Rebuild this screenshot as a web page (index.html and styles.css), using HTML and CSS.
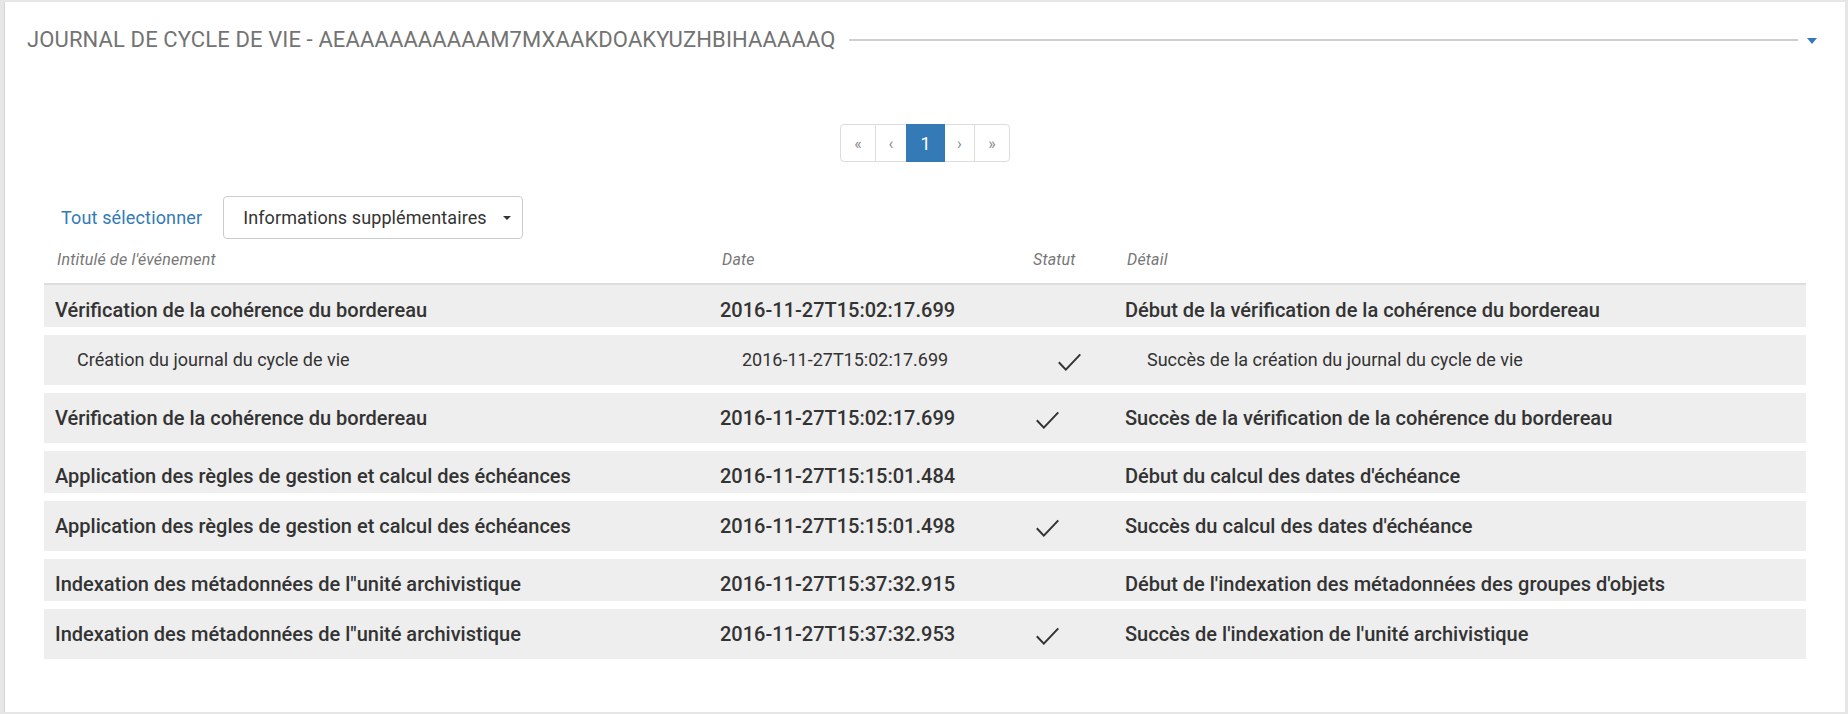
FILE: index.html
```html
<!DOCTYPE html>
<html lang="fr">
<head>
<meta charset="utf-8">
<title>Journal de cycle de vie</title>
<link rel="stylesheet" href="styles.css">
</head>
<body>
<div class="panel">
  <div class="panel-head">
    <span class="title">JOURNAL DE CYCLE DE VIE - AEAAAAAAAAAAM7MXAAKDOAKYUZHBIHAAAAAQ</span>
    <span class="rule"></span>
    <span class="toggle"></span>
  </div>

  <div class="pager-wrap">
    <ul class="pager">
      <li class="pg pg-first">&laquo;</li>
      <li class="pg pg-prev">&lsaquo;</li>
      <li class="pg pg-cur">1</li>
      <li class="pg pg-next">&rsaquo;</li>
      <li class="pg pg-last">&raquo;</li>
    </ul>
  </div>

  <div class="toolbar">
    <a class="select-all">Tout sélectionner</a>
    <div class="dropdown">
      <span>Informations supplémentaires</span>
      <span class="caret"></span>
    </div>
  </div>

  <div class="grid-head">
    <div class="cell">Intitulé de l'événement</div>
    <div class="cell">Date</div>
    <div class="cell">Statut</div>
    <div class="cell">Détail</div>
  </div>

  <div class="rows">
    <div class="row parent">
      <div class="cell">Vérification de la cohérence du bordereau</div>
      <div class="cell">2016-11-27T15:02:17.699</div>
      <div class="cell"></div>
      <div class="cell">Début de la vérification de la cohérence du bordereau</div>
    </div>
    <div class="row child">
      <div class="cell">Création du journal du cycle de vie</div>
      <div class="cell">2016-11-27T15:02:17.699</div>
      <div class="cell"><svg class="ok" viewBox="0 0 23 18" width="23" height="18"><polyline points="0.8,9.3 7.8,16.6 22.3,1.4"/></svg></div>
      <div class="cell">Succès de la création du journal du cycle de vie</div>
    </div>
    <div class="row parent">
      <div class="cell">Vérification de la cohérence du bordereau</div>
      <div class="cell">2016-11-27T15:02:17.699</div>
      <div class="cell"><svg class="ok" viewBox="0 0 23 18" width="23" height="18"><polyline points="0.8,9.3 7.8,16.6 22.3,1.4"/></svg></div>
      <div class="cell">Succès de la vérification de la cohérence du bordereau</div>
    </div>
    <div class="row parent">
      <div class="cell">Application des règles de gestion et calcul des échéances</div>
      <div class="cell">2016-11-27T15:15:01.484</div>
      <div class="cell"></div>
      <div class="cell">Début du calcul des dates d'échéance</div>
    </div>
    <div class="row parent">
      <div class="cell">Application des règles de gestion et calcul des échéances</div>
      <div class="cell">2016-11-27T15:15:01.498</div>
      <div class="cell"><svg class="ok" viewBox="0 0 23 18" width="23" height="18"><polyline points="0.8,9.3 7.8,16.6 22.3,1.4"/></svg></div>
      <div class="cell">Succès du calcul des dates d'échéance</div>
    </div>
    <div class="row parent">
      <div class="cell">Indexation des métadonnées de l"unité archivistique</div>
      <div class="cell">2016-11-27T15:37:32.915</div>
      <div class="cell"></div>
      <div class="cell">Début de l'indexation des métadonnées des groupes d'objets</div>
    </div>
    <div class="row parent">
      <div class="cell">Indexation des métadonnées de l"unité archivistique</div>
      <div class="cell">2016-11-27T15:37:32.953</div>
      <div class="cell"><svg class="ok" viewBox="0 0 23 18" width="23" height="18"><polyline points="0.8,9.3 7.8,16.6 22.3,1.4"/></svg></div>
      <div class="cell">Succès de l'indexation de l'unité archivistique</div>
    </div>
  </div>
</div>
</body>
</html>
```

FILE: styles.css
```css
* { box-sizing: border-box; }

html, body {
  margin: 0;
  padding: 0;
  height: 100%;
}

body {
  background: #e6e6e6;
  font-family: Roboto, "Liberation Sans", Arial, sans-serif;
  color: #333;
  padding: 2px 3px 2px 4px;
}

.panel {
  background: #fff;
  height: 710px;
  border-left: 1px solid #d6d6d6;
  padding: 0 39px 0 39px;
}

/* header */
.panel-head {
  display: flex;
  align-items: center;
  height: 52px;
  padding-top: 24px;
  margin: 0 -11px 0 -17px;
}

.title {
  font-size: 22px;
  line-height: 28px;
  color: #737373;
  letter-spacing: 0.12px;
  white-space: nowrap;
}

.rule {
  flex: 1;
  height: 2px;
  background: #cfcfcf;
  margin-left: 13px;
  margin-right: 9px;
}

.toggle {
  width: 0;
  height: 0;
  border-left: 5px solid transparent;
  border-right: 5px solid transparent;
  border-top: 6px solid #337ab7;
  margin-top: 2px;
}

/* pagination */
.pager-wrap {
  display: flex;
  justify-content: center;
  margin-top: 70px;
}

.pager {
  display: flex;
  list-style: none;
  margin: 0;
  padding: 0;
}

.pg {
  height: 38px;
  display: flex;
  align-items: center;
  justify-content: center;
  border: 1px solid #ddd;
  margin-left: -1px;
  font-size: 16px;
  color: #888;
  background: #fff;
}

.pg-first { width: 36px; margin-left: 0; border-radius: 4px 0 0 4px; }
.pg-prev { width: 32px; }
.pg-cur {
  width: 39px;
  background: #337ab7;
  border-color: #337ab7;
  color: #fff;
  font-size: 18px;
  position: relative;
  z-index: 1;
}
.pg-next { width: 31px; }
.pg-last { width: 36px; border-radius: 0 4px 4px 0; }

/* toolbar */
.toolbar {
  display: flex;
  align-items: center;
  margin-top: 34px;
  padding-left: 17px;
}

.select-all {
  font-size: 18px;
  color: #337ab7;
  letter-spacing: 0.15px;
  margin-right: 21px;
}

.dropdown {
  display: flex;
  align-items: center;
  height: 43px;
  width: 300px;
  border: 1px solid #ccc;
  border-radius: 4px;
  padding: 0 11px 0 19px;
  font-size: 18px;
  letter-spacing: 0.1px;
  color: #333;
}

.dropdown span:first-child { flex: 1; }

.caret {
  width: 0;
  height: 0;
  border-left: 4px solid transparent;
  border-right: 4px solid transparent;
  border-top: 4px solid #333;
}

/* grid */
.grid-head,
.row {
  display: grid;
  grid-template-columns: 665px 311px 94px 1fr;
}

.grid-head {
  padding: 8px 0 10px;
  border-bottom: 2px solid #ddd;
}

.grid-head .cell {
  font-size: 16px;
  line-height: 26px;
  font-style: italic;
  color: #777;
  letter-spacing: 0.2px;
  padding-left: 13px;
}

.rows {
  display: flex;
  flex-direction: column;
  gap: 8px;
}

.row {
  background: #eee;
  align-items: start;
  min-height: 42px;
  padding: 12px 0 4px;
}

.row .cell {
  font-size: 18px;
  line-height: 26px;
  padding-left: 11px;
  white-space: nowrap;
}

.row.parent .cell {
  font-size: 20px;
  font-weight: 500;
}

.row.child .cell {
  padding-left: 33px;
  font-weight: 400;
}

.ok {
  display: block;
  margin: 6px 0 10px 5px;
  fill: none;
  stroke: #333;
  stroke-width: 2;
}
```
